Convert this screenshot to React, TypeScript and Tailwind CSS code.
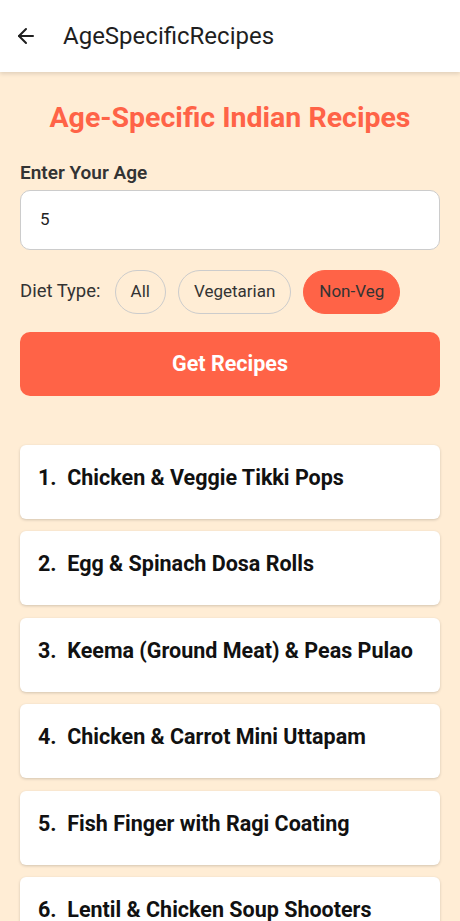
import { ArrowLeft } from "lucide-react";

const recipes = [
  "Chicken & Veggie Tikki Pops",
  "Egg & Spinach Dosa Rolls",
  "Keema (Ground Meat) & Peas Pulao",
  "Chicken & Carrot Mini Uttapam",
  "Fish Finger with Ragi Coating",
  "Lentil & Chicken Soup Shooters",
  "Mini Chicken Kathi Rolls",
];

export default function App() {
  const diet = "Non-Veg";
  return (
    <div className="h-[921px] overflow-hidden bg-[#ffedd5] font-['Roboto',sans-serif]">
      {/* App bar */}
      <header className="relative z-10 flex h-[72px] items-center bg-white px-[14px] shadow-[0_2px_4px_rgba(0,0,0,0.12)]">
        <ArrowLeft className="h-6 w-6 text-[#1f1f1f]" strokeWidth={2} />
        <h1 className="ml-[25px] text-[24px] text-[#1f1f1f]">AgeSpecificRecipes</h1>
      </header>

      <main className="px-5">
        <h2 className="mt-[28px] text-center text-[28.5px] font-bold leading-[36px] text-[#ff6347]">
          Age-Specific Indian Recipes
        </h2>

        <label className="mt-[25px] block text-[19px] font-semibold leading-[24px] text-[#333]">
          Enter Your Age
        </label>
        <div className="mt-[5px] flex h-[60px] items-center rounded-[10px] border border-[#ccc] bg-white px-[19px] text-[17px] text-[#222]">
          5
        </div>

        <div className="mt-[20px] flex h-[44px] items-center">
          <span className="mr-[14px] text-[18.5px] text-[#333]">Diet Type:</span>
          {["All", "Vegetarian", "Non-Veg"].map((d) => (
            <button
              key={d}
              className={
                d === diet
                  ? "mr-[12px] flex h-[44px] items-center rounded-full border border-[#ff6347] bg-[#ff6347] px-[15px] text-[17px] text-[#333]"
                  : "mr-[12px] flex h-[44px] items-center rounded-full border border-[#ccc] px-[15px] text-[17px] text-[#333]"
              }
            >
              {d}
            </button>
          ))}
        </div>

        <button className="mt-[18px] flex h-[64px] w-full items-center justify-center rounded-[10px] bg-[#ff6347] text-[21.5px] font-bold text-white">
          Get Recipes
        </button>

        <ul className="mt-[49px] flex flex-col gap-[12.4px]">
          {recipes.map((r, i) => (
            <li
              key={r}
              className="flex h-[74px] items-start rounded-[6px] bg-white px-[18px] pt-[19px] shadow-[0_1px_3px_rgba(0,0,0,0.18)]"
            >
              <span className="whitespace-pre text-[21.5px] font-bold leading-[28px] text-[#111]">
                {`${i + 1}.  ${r}`}
              </span>
            </li>
          ))}
        </ul>
      </main>
    </div>
  );
}
